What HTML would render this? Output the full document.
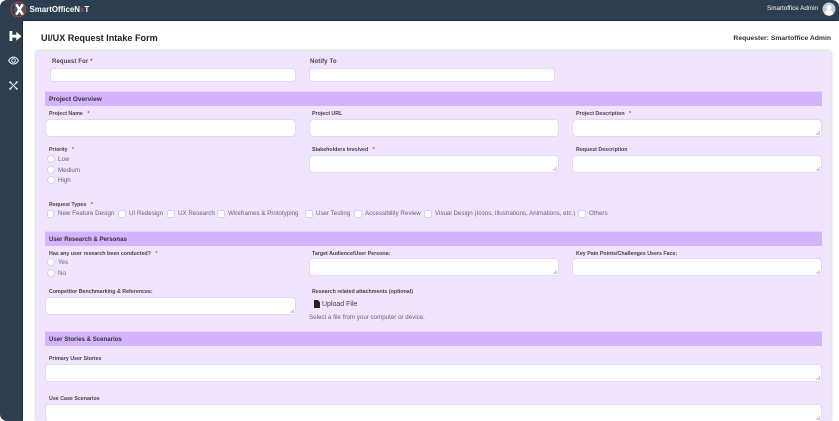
<!DOCTYPE html>
<html><head><meta charset="utf-8"><style>
html,body{margin:0;padding:0;width:839px;height:421px;overflow:hidden;background:#fff;font-family:"Liberation Sans",sans-serif}
#app{position:relative;width:839px;height:421px;overflow:hidden;background:#2c3e50;border-radius:7px 7px 0 7px}
#main{position:absolute;left:23px;top:21px;width:816px;height:400px;background:#fff;box-shadow:-1px -1px 0 #1c2a38}
#panel{position:absolute;left:36px;top:51px;width:795px;height:370px;background:#f1e4ff;box-shadow:0 0 3px #bbb;border-radius:2px 2px 0 0}
.a{position:absolute;white-space:nowrap}
.l{position:absolute;white-space:nowrap;font-size:5.3px;line-height:8px;margin-top:1px;color:#444;font-weight:bold}
.m{font-size:6px;letter-spacing:.02em;margin-top:1px}
.l b{color:#e33;margin-left:3px}
.t{position:absolute;white-space:nowrap;font-size:6.2px;line-height:9px;margin-top:1px;color:#666}
.i{position:absolute;background:#fff;border:1px solid #e3d9ee;border-radius:4px;box-sizing:border-box}
.g::after{content:"";position:absolute;right:1px;bottom:1px;width:4px;height:4px;background:linear-gradient(135deg,transparent 50%,#aaa 50%,#aaa 60%,transparent 60%,transparent 75%,#aaa 75%,#aaa 85%,transparent 85%)}
.b{position:absolute;left:45px;width:777px;height:15px;background:#d4b3ff;border-top:1px solid #e5d3fb;box-sizing:border-box;font-size:6.1px;font-weight:bold;line-height:14px;color:#333;padding-left:4px}
.r{position:absolute;width:8px;height:8px;background:#fff;border:1px solid #d9d2e0;border-radius:50%;box-sizing:border-box}
.c{position:absolute;width:7.500px;height:8px;top:210px;background:#fff;border:1px solid #d9d2e0;border-radius:2px;box-sizing:border-box}
</style></head><body><div id="app">
<div id="main"></div>
<svg class="a" style="left:10px;top:1px" width="17" height="17" viewBox="0 0 18 18"><circle cx="9" cy="9" r="7.8" fill="none" stroke="#b8392c" stroke-width="1.2"/><circle cx="10" cy="9" r="6" fill="#4a5868"/><path d="M6.500 3.500 L13.500 14.500 M13.500 3.500 L6.500 14.500" stroke="#fff" stroke-width="2.600"/></svg>
<div class="a" style="left:29.5px;top:5px;font-size:7.900px;line-height:10px;font-weight:bold;color:#fff">SmartOfficeN<span style="color:#b0483e">x</span>T</div>
<div class="a" style="left:767px;top:5px;font-size:6.3px;line-height:8px;color:#fff">Smartoffice Admin</div>
<svg class="a" style="left:822px;top:2px" width="14" height="14" viewBox="0 0 14 14"><circle cx="7" cy="7" r="6.5" fill="#c7cad0"/><circle cx="7" cy="5.4" r="2.5" fill="#fff"/><path d="M2.6 12c.4-3 2.2-4 4.4-4s4 1 4.4 4a6.5 6.5 0 0 1-8.8 0z" fill="#fff"/></svg>
<svg class="a" style="left:9px;top:30px" width="13" height="13" viewBox="0 0 13 13"><path d="M0.5 1h2.8v10H.5z M3.3 4.8h4V1.800L12.500 6.200 7.300 10.600V7.600h-4z" fill="#fff"/></svg>
<svg class="a" style="left:8px;top:56px" width="11" height="9" viewBox="0 0 11 9"><path d="M.6 4.500C2 2 3.600 1 5.500 1s3.500 1 4.900 3.500C9 7 7.400 8 5.500 8S2 7 .6 4.500z" fill="none" stroke="#fff" stroke-width="1"/><circle cx="5.500" cy="4.500" r="1.800" fill="none" stroke="#fff" stroke-width=".9"/></svg>
<svg class="a" style="left:9px;top:81px" width="9" height="9" viewBox="0 0 9 9"><path d="M1.500 1.500L7.500 7.500M7.500 1.500L1.500 7.500" stroke="#e8ecef" stroke-width="1"/><circle cx="1.300" cy="1.300" r="1.100" fill="#e8ecef"/><circle cx="7.700" cy="1.300" r="1.100" fill="#e8ecef"/><circle cx="1.300" cy="7.700" r="1.100" fill="#e8ecef"/><circle cx="7.700" cy="7.700" r="1.100" fill="#e8ecef"/></svg>

<div class="a" style="left:41px;top:32.500px;font-size:9.100px;line-height:11px;font-weight:bold;color:#222">UI/UX Request Intake Form</div>
<div class="a" style="right:8px;top:34px;font-size:6.800px;line-height:9px;color:#333;font-weight:bold">Requester: Smartoffice Admin</div>
<div id="panel"></div>

<div class="l m" style="left:52px;top:57px">Request For <b style="margin-left:0">*</b></div>
<div class="i" style="left:50px;top:68px;width:246px;height:14px"></div>
<div class="l m" style="left:310px;top:57px">Notify To</div>
<div class="i" style="left:309px;top:68px;width:246px;height:14px"></div>

<div class="b" style="top:91px;line-height:15px;font-size:6.500px">Project Overview</div>
<div class="l" style="left:49px;top:109px">Project Name <b>*</b></div>
<div class="i" style="left:45px;top:119px;width:251px;height:18px"></div>
<div class="l" style="left:312px;top:109px">Project URL</div>
<div class="i" style="left:309px;top:119px;width:250px;height:18px"></div>
<div class="l" style="left:576px;top:109px">Project Description <b>*</b></div>
<div class="i g" style="left:572px;top:119px;width:250px;height:18px"></div>

<div class="l" style="left:49px;top:145px">Priority <b>*</b></div>
<div class="r" style="left:47px;top:155px"></div><div class="t" style="left:58px;top:154px">Low</div>
<div class="r" style="left:47px;top:166px"></div><div class="t" style="left:58px;top:165px">Medium</div>
<div class="r" style="left:47px;top:176px"></div><div class="t" style="left:58px;top:175px">High</div>
<div class="l" style="left:312px;top:145px">Stakeholders Involved <b>*</b></div>
<div class="i g" style="left:309px;top:155px;width:250px;height:18px"></div>
<div class="l" style="left:576px;top:145px">Request Description</div>
<div class="i g" style="left:572px;top:155px;width:250px;height:18px"></div>

<div class="l" style="left:49px;top:200px">Request Types <b>*</b></div>
<div class="c" style="left:46.500px"></div><div class="t" style="left:58px;top:208px">New Feature Design</div>
<div class="c" style="left:118px"></div><div class="t" style="left:129px;top:208px">UI Redesign</div>
<div class="c" style="left:167px"></div><div class="t" style="left:178px;top:208px">UX Research</div>
<div class="c" style="left:217px"></div><div class="t" style="left:228px;top:208px">Wireframes &amp; Prototyping</div>
<div class="c" style="left:305px"></div><div class="t" style="left:316px;top:208px">User Testing</div>
<div class="c" style="left:354px"></div><div class="t" style="left:365px;top:208px">Accessibility Review</div>
<div class="c" style="left:424px"></div><div class="t" style="left:435px;top:208px">Visual Design (Icons, Illustrations, Animations, etc.)</div>
<div class="c" style="left:578px"></div><div class="t" style="left:589px;top:208px">Others</div>

<div class="b" style="top:231px;line-height:15px">User Research &amp; Personas</div>
<div class="l" style="left:49px;top:248.500px">Has any user research been conducted? <b>*</b></div>
<div class="r" style="left:47px;top:258px"></div><div class="t" style="left:58px;top:257px">Yes</div>
<div class="r" style="left:47px;top:269px"></div><div class="t" style="left:58px;top:268px">No</div>
<div class="l" style="left:312px;top:249px">Target Audience/User Persona:</div>
<div class="i g" style="left:309px;top:258px;width:250px;height:18px"></div>
<div class="l" style="left:576px;top:249px">Key Pain Points/Challenges Users Face:</div>
<div class="i g" style="left:572px;top:258px;width:250px;height:18px"></div>

<div class="l" style="left:49px;top:287px">Competitor Benchmarking &amp; References:</div>
<div class="i g" style="left:45px;top:297px;width:251px;height:18px"></div>
<div class="l" style="left:312px;top:287px">Research related attachments (optional)</div>
<svg class="a" style="left:314px;top:300px" width="6" height="8" viewBox="0 0 6 8"><path d="M0 0H3.800L6 2.200V8H0z" fill="#222"/></svg>
<div class="a" style="left:322px;top:300px;font-size:7px;line-height:10px;color:#444">Upload File</div>
<div class="t" style="left:309px;top:311.500px">Select a file from your computer or device.</div>

<div class="b" style="top:331px;line-height:15px">User Stories &amp; Scenarios</div>
<div class="l" style="left:49px;top:354px">Primary User Stories</div>
<div class="i g" style="left:45px;top:364px;width:777px;height:18px"></div>
<div class="l" style="left:49px;top:394px">Use Case Scenarios</div>
<div class="i g" style="left:45px;top:404px;width:777px;height:18px"></div>
</div></body></html>
